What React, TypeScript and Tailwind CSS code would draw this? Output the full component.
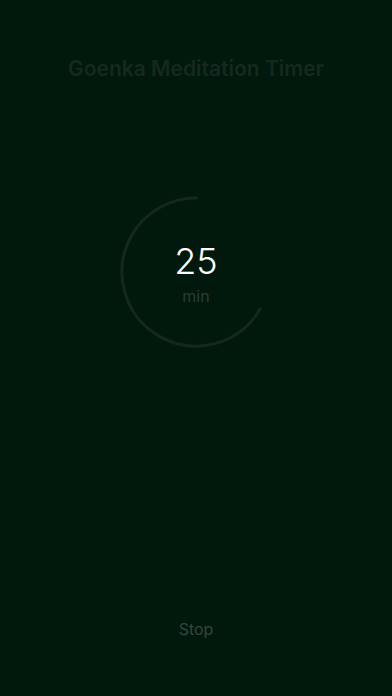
import React from 'react';

// Remaining fraction of the session shown on the ring
const REMAINING = 2 / 3;

function TimerRing({ minutes }: { minutes: number }) {
  const r = 74;
  const c = 2 * Math.PI * r;
  return (
    <div className="relative w-[160px] h-[160px]">
      <svg width="160" height="160" viewBox="0 0 160 160" className="absolute inset-0">
        <circle
          cx="80"
          cy="80"
          r={r}
          fill="none"
          stroke="#16281d"
          strokeWidth="3"
          strokeLinecap="round"
          strokeDasharray={`${c * REMAINING} ${c}`}
          transform="rotate(30 80 80)"
        />
      </svg>
      <div className="absolute inset-0 flex flex-col items-center justify-center pt-[2px]">
        <span className="text-[36px] leading-none text-white font-light">{minutes}</span>
        <span className="text-[16px] leading-none text-[#2b3d32] mt-[9px]">min</span>
      </div>
    </div>
  );
}

export default function App() {
  return (
    <div
      className="w-[392px] h-[696px] bg-[#01180c] flex flex-col items-center"
      style={{ fontFamily: 'Inter, "Noto Sans", sans-serif' }}
    >
      <h1 className="mt-[56px] text-[21px] leading-[26px] font-semibold text-[#16291e]">
        Goenka Meditation Timer
      </h1>
      <div className="mt-[110px]">
        <TimerRing minutes={25} />
      </div>
      <div className="flex-1" />
      <button type="button" className="mb-[57px] text-[16px] leading-[20px] text-[#33463a]">
        Stop
      </button>
    </div>
  );
}
